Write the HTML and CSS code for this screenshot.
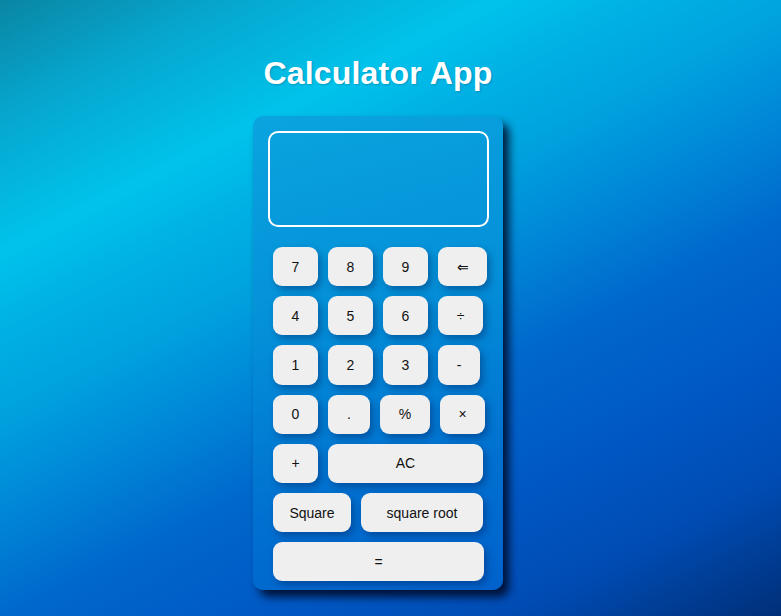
FILE: index.html
```html
<!DOCTYPE html>
<html lang="en">
<head>
<meta charset="utf-8">
<title>Calculator App</title>
<link rel="stylesheet" href="styles.css">
</head>
<body>
<main class="page">
  <h1 class="title">Calculator App</h1>
  <div class="calc">
    <div class="display"></div>
    <div class="keys">
      <div class="row">
        <button class="key">7</button>
        <button class="key">8</button>
        <button class="key">9</button>
        <button class="key w49">&#8656;</button>
      </div>
      <div class="row">
        <button class="key">4</button>
        <button class="key">5</button>
        <button class="key">6</button>
        <button class="key">&divide;</button>
      </div>
      <div class="row">
        <button class="key">1</button>
        <button class="key">2</button>
        <button class="key">3</button>
        <button class="key w42">-</button>
      </div>
      <div class="row">
        <button class="key">0</button>
        <button class="key w42">.</button>
        <button class="key w50">%</button>
        <button class="key">&times;</button>
      </div>
      <div class="row">
        <button class="key">+</button>
        <button class="key w155">AC</button>
      </div>
      <div class="row">
        <button class="key w78">Square</button>
        <button class="key w122">square root</button>
      </div>
      <div class="row">
        <button class="key w211">=</button>
      </div>
    </div>
  </div>
</main>
</body>
</html>
```

FILE: styles.css
```css
* { box-sizing: border-box; }
html, body { height: 100%; }
body {
  margin: 0;
  background: linear-gradient(153deg, #0a86a4 0%, #06a7cf 12%, #00c3eb 25%, #00b0e4 33%, #00a2de 41%, #0083d6 52%, #0068cc 61%, #0058c4 74%, #004cb4 86%, #002f78 100%);
  font-family: "Liberation Sans", Arial, sans-serif;
  overflow: hidden;
}
.page {
  display: flex;
  flex-direction: column;
  align-items: center;
  padding-right: 25px;
  padding-top: 52px;
}
.title {
  margin: 0 0 22px;
  color: #fff;
  font-family: "Liberation Sans", Arial, sans-serif;
  font-weight: bold;
  font-size: 32px;
  line-height: 42px;
  letter-spacing: 0.2px;
  text-shadow: 1px 1px 2px rgba(0, 40, 80, 0.25);
}
.calc {
  width: 250px;
  height: 474px;
  border-radius: 10px;
  padding: 15px 14px 9px 15px;
  background: linear-gradient(165deg, #0aa4df 0%, #0490d8 40%, #0070d0 75%, #0062cc 100%);
  box-shadow: 6px 7px 9px rgba(0, 10, 40, 0.88);
}
.display {
  width: 221px;
  height: 96px;
  border: 2px solid #fff;
  border-radius: 10px;
}
.keys {
  margin-top: 20px;
  padding-left: 5px;
  display: flex;
  flex-direction: column;
  gap: 10px;
}
.row {
  display: flex;
  gap: 10px;
}
.key {
  width: 45px;
  height: 39.2px;
  padding: 0;
  border: none;
  border-radius: 9px;
  background: #efefef;
  color: #111;
  font-family: "Liberation Sans", Arial, sans-serif;
  font-size: 14px;
  box-shadow: 3px 4px 7px rgba(0, 30, 90, 0.4);
  flex: none;
}
.w42 { width: 42px; }
.w49 { width: 49px; }
.w50 { width: 50px; }
.w78 { width: 78px; }
.w122 { width: 122px; }
.w155 { width: 155px; }
.w211 { width: 211px; }
```
